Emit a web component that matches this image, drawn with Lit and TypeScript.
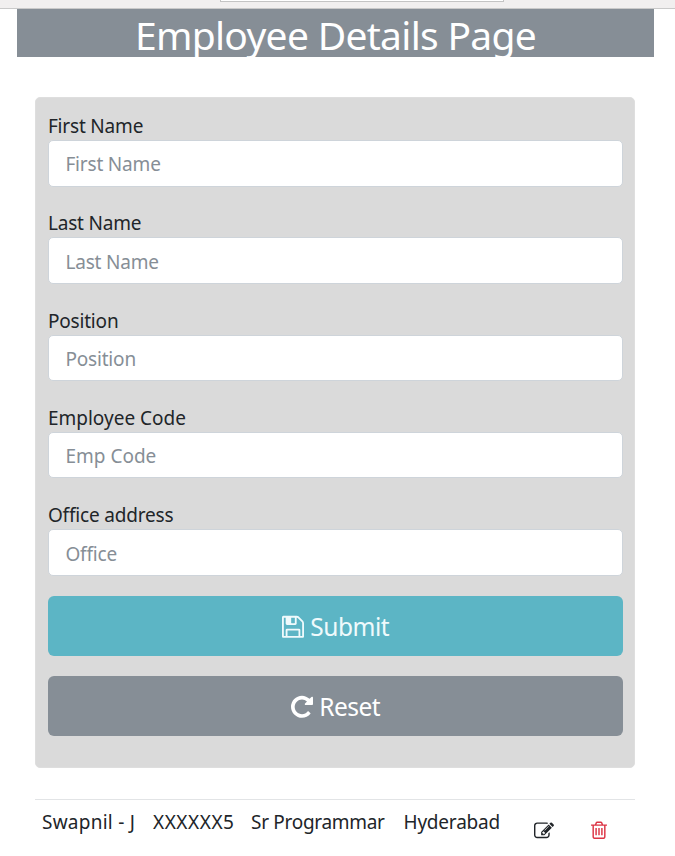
import { LitElement, html, css, svg } from "lit";
import { customElement } from "lit/decorators.js";

const icons = {
  save: { w: 1536, d: "M384 1536h768v-384h-768v384zM1280 1536h128v-896q0-14-10-38.5t-20-34.5l-281-281q-10-10-34-20t-39-10v416q0 40-28 68t-68 28h-576q-40 0-68-28t-28-68v-416h-128v1280h128v-416q0-40 28-68t68-28h832q40 0 68 28t28 68v416zM896 608v-320q0-13-9.5-22.5t-22.5-9.5h-192q-13 0-22.5 9.5t-9.5 22.5v320q0 13 9.5 22.5t22.5 9.5h192q13 0 22.5-9.5t9.5-22.5zM1536 640v928q0 40-28 68t-68 28h-1344q-40 0-68-28t-28-68v-1344q0-40 28-68t68-28h928q40 0 88 20t76 48l280 280q28 28 48 76t20 88z" },
  repeat: { w: 1536, d: "M1536 256v448q0 26-19 45t-45 19h-448q-42 0-59-40-17-39 14-69l138-138q-148-137-349-137-104 0-198.500 40.500t-163.500 109.500-109.500 163.500-40.500 198.500 40.500 198.500 109.500 163.500 163.500 109.500 198.500 40.500q119 0 225-52t179-147q7-10 23-12 15 0 25 9l137 138q9 8 9.500 20.500t-7.500 22.500q-109 132-264 204.500t-327 72.500q-156 0-298-61t-245-164-164-245-61-298 61-298 164-245 245-164 298-61q147 0 284.500 55.500t244.500 156.500l130-129q29-31 70-14 39 17 39 59z" },
  edit: { w: 1792, d: "M888 1184l116-116-152-152-116 116v56h96v96h56zM1328 464q-16-16-33 1l-350 350q-17 17-1 33t33-1l350-350q17-17 1-33zM1408 1058v190q0 119-84.500 203.500t-203.500 84.500h-832q-119 0-203.500-84.500t-84.500-203.500v-832q0-119 84.500-203.500t203.500-84.500h832q63 0 117 25 15 7 18 23 3 17-9 29l-49 49q-14 14-32 8-23-6-45-6h-832q-66 0-113 47t-47 113v832q0 66 47 113t113 47h832q66 0 113-47t47-113v-126q0-13 9-22l64-64q15-15 35-7t20 29zM1312 320l288 288-672 672h-288v-288zM1756 452l-92 92-288-288 92-92q28-28 68-28t68 28l152 152q28 28 28 68t-28 68z" },
  trash: { w: 1408, d: "M512 736v576q0 14-9 23t-23 9h-64q-14 0-23-9t-9-23v-576q0-14 9-23t23-9h64q14 0 23 9t9 23zM768 736v576q0 14-9 23t-23 9h-64q-14 0-23-9t-9-23v-576q0-14 9-23t23-9h64q14 0 23 9t9 23zM1024 736v576q0 14-9 23t-23 9h-64q-14 0-23-9t-9-23v-576q0-14 9-23t23-9h64q14 0 23 9t9 23zM1152 1460v-948h-896v948q0 22 7 40.500t14.500 27 10.500 8.500h832q3 0 10.500-8.500t14.500-27 7-40.500zM480 384h448l-48-117q-7-9-17-11h-317q-10 2-17 11zM1408 416v64q0 14-9 23t-23 9h-96v948q0 83-47 143.500t-113 60.500h-832q-66 0-113-58.500t-47-141.500v-952h-96q-14 0-23-9t-9-23v-64q0-14 9-23t23-9h309l70-167q15-37 54-63t79-26h320q40 0 79 26t54 63l70 167h309q14 0 23 9t9 23z" },
};

const icon = (name: keyof typeof icons) => html`<svg class="icon ${name}" viewBox="0 0 ${icons[name].w} 1792" aria-hidden="true">${svg`<path d=${icons[name].d}></path>`}</svg>`;

const fields = [
  { label: "First Name", hint: "First Name", cls: "first" },
  { label: "Last Name", hint: "Last Name", cls: "last" },
  { label: "Position", hint: "Position", cls: "position" },
  { label: "Employee Code", hint: "Emp Code", cls: "code" },
  { label: "Office address", hint: "Office", cls: "office" },
];

@customElement("app-root")
export class AppRoot extends LitElement {
  static styles = css`
    :host {
      display: block;
      height: 856px;
      overflow: hidden;
      background: #fff;
      color: #212529;
      font: 19px/29px "Noto Sans", "Open Sans", sans-serif;
    }
    * { box-sizing: border-box; }
    .chrome { height: 9px; background: #f1efef; border-bottom: 1px solid #c9c9c9; }
    .tab { width: 284px; height: 2px; margin-left: 220px; border: 1px solid #c4c4c4; border-top: 0; background: #fff; }
    .title {
      width: 637px; height: 48px; margin: 0 0 40px 17px;
      background: #868e96; color: #fff;
      font-size: 39px; font-weight: 400; line-height: 51px; text-align: center;
      letter-spacing: -0.7px;
    }
    form {
      width: 599.600px; height: 671.400px; margin-left: 35.400px; padding: 13px 11px 0 11.500px;
      background: #dadada; border: 1px solid #dedede; border-radius: 5px;
    }
    .field { height: 97.3px; }
    .field.office { height: 95.8px; }
    label { display: block; height: 29.200px; line-height: 31px; letter-spacing: -0.18px; }
    .code label, .code input { letter-spacing: 0.01px; }
    .office label { letter-spacing: -0.18px; }
    input {
      display: block; width: 100%; height: 46.400px; padding: 2px 16.500px 0;
      border: 1px solid #ced4da; border-radius: 5px; background: #fff;
      font: inherit; letter-spacing: -0.18px;
    }
    input::placeholder { color: #868e96; opacity: 1; }
    button {
      display: flex; align-items: center; justify-content: center; gap: 6.500px;
      width: 100%; height: 60px; margin: 0 0 20px; padding: 2px 0 0;
      border: 0; border-radius: 6px; color: #fff;
      font: 24.500px/36px "Noto Sans", "Open Sans", sans-serif;
      letter-spacing: -0.5px;
    }
    .submit { background: #5cb5c5; color: #effafc; }
    .reset { background: #868e96; }
    .icon { display: block; fill: currentColor; flex: none; }
    button .icon { width: 22px; height: 25.670px; }
    .row {
      display: grid; grid-template-columns: 111px 98px 152.500px 130px 57.500px 1fr;
      width: 600px; height: 56px; margin: 30.600px 0 0 35px; padding: 8px 0 0 7px;
      border-top: 1px solid #e2e4e6; white-space: nowrap;
    }
    .name { letter-spacing: 0.25px; }
    .id { letter-spacing: 0.55px; }
    .job { letter-spacing: -0.3px; }
    .city { letter-spacing: -0.2px; }
    .edit { width: 20px; height: 20px; margin-top: 13px; }
    .trash { width: 16px; height: 20.400px; margin-top: 12.500px; color: #dc3545; }
  `;

  render() {
    return html`
      <div class="chrome"><div class="tab"></div></div>
      <h1 class="title">Employee Details Page</h1>
      <form>
        ${fields.map((f) => html`<div class="field ${f.cls}"><label for=${f.cls}>${f.label}</label><input id=${f.cls} placeholder=${f.hint} /></div>`)}
        <button type="button" class="submit">${icon("save")}<span>Submit</span></button>
        <button type="button" class="reset">${icon("repeat")}<span>Reset</span></button>
      </form>
      <div class="row">
        <span class="name">Swapnil - J</span><span class="id">XXXXXX5</span>
        <span class="job">Sr Programmar</span><span class="city">Hyderabad</span>
        ${icon("edit")}${icon("trash")}
      </div>
    `;
  }
}
